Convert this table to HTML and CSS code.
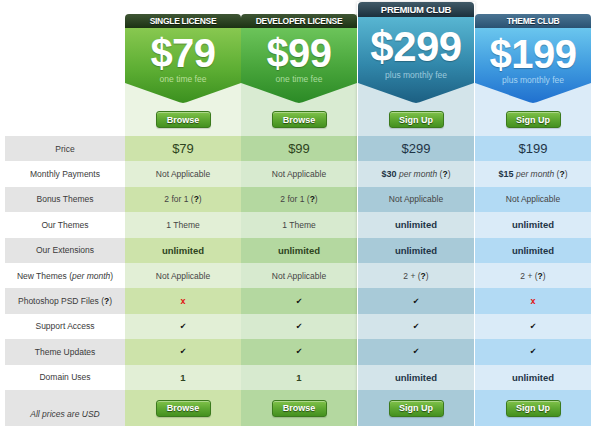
FILE: index.html
```html
<!DOCTYPE html>
<html>
<head>
<meta charset="utf-8">
<link rel="stylesheet" href="styles.css">
</head>
<body>
<div class="pricing">
  <div class="col labels">
    <div class="rows">
      <div class="cell">Price</div>
      <div class="cell">Monthly Payments</div>
      <div class="cell">Bonus Themes</div>
      <div class="cell">Our Themes</div>
      <div class="cell">Our Extensions</div>
      <div class="cell">New Themes (<i>per month</i>)</div>
      <div class="cell">Photoshop PSD Files (<b class="q">?</b>)</div>
      <div class="cell">Support Access</div>
      <div class="cell">Theme Updates</div>
      <div class="cell">Domain Uses</div>
      <div class="cell last note-cell"><i>All prices are USD</i></div>
    </div>
  </div>

  <div class="col plan single">
    <div class="tab">Single License</div>
    <div class="top">
      <div class="price"><div class="amount">$79</div><div class="fee">one time fee</div></div>
      <div class="btn-wrap"><span class="btn">Browse</span></div>
    </div>
    <div class="rows">
      <div class="cell big">$79</div>
      <div class="cell">Not Applicable</div>
      <div class="cell">2 for 1 (<b class="q">?</b>)</div>
      <div class="cell">1 Theme</div>
      <div class="cell strong">unlimited</div>
      <div class="cell">Not Applicable</div>
      <div class="cell"><span class="no">x</span></div>
      <div class="cell"><span class="yes">✔</span></div>
      <div class="cell"><span class="yes">✔</span></div>
      <div class="cell strong">1</div>
      <div class="cell last"><span class="btn">Browse</span></div>
    </div>
  </div>

  <div class="col plan developer">
    <div class="tab">Developer License</div>
    <div class="top">
      <div class="price"><div class="amount">$99</div><div class="fee">one time fee</div></div>
      <div class="btn-wrap"><span class="btn">Browse</span></div>
    </div>
    <div class="rows">
      <div class="cell big">$99</div>
      <div class="cell">Not Applicable</div>
      <div class="cell">2 for 1 (<b class="q">?</b>)</div>
      <div class="cell">1 Theme</div>
      <div class="cell strong">unlimited</div>
      <div class="cell">Not Applicable</div>
      <div class="cell"><span class="yes">✔</span></div>
      <div class="cell"><span class="yes">✔</span></div>
      <div class="cell"><span class="yes">✔</span></div>
      <div class="cell strong">1</div>
      <div class="cell last"><span class="btn">Browse</span></div>
    </div>
  </div>

  <div class="col plan premium">
    <div class="tab">Premium Club</div>
    <div class="top">
      <div class="price"><div class="amount">$299</div><div class="fee">plus monthly fee</div></div>
      <div class="btn-wrap"><span class="btn">Sign Up</span></div>
    </div>
    <div class="rows">
      <div class="cell big">$299</div>
      <div class="cell"><b class="dk">$30</b>&nbsp;<i>per month</i>&nbsp;(<b class="q">?</b>)</div>
      <div class="cell">Not Applicable</div>
      <div class="cell strong">unlimited</div>
      <div class="cell strong">unlimited</div>
      <div class="cell">2 + (<b class="q">?</b>)</div>
      <div class="cell"><span class="yes">✔</span></div>
      <div class="cell"><span class="yes">✔</span></div>
      <div class="cell"><span class="yes">✔</span></div>
      <div class="cell strong">unlimited</div>
      <div class="cell last"><span class="btn">Sign Up</span></div>
    </div>
  </div>

  <div class="col plan theme">
    <div class="tab">Theme Club</div>
    <div class="top">
      <div class="price"><div class="amount">$199</div><div class="fee">plus monthly fee</div></div>
      <div class="btn-wrap"><span class="btn">Sign Up</span></div>
    </div>
    <div class="rows">
      <div class="cell big">$199</div>
      <div class="cell"><b class="dk">$15</b>&nbsp;<i>per month</i>&nbsp;(<b class="q">?</b>)</div>
      <div class="cell">Not Applicable</div>
      <div class="cell strong">unlimited</div>
      <div class="cell strong">unlimited</div>
      <div class="cell">2 + (<b class="q">?</b>)</div>
      <div class="cell"><span class="no">x</span></div>
      <div class="cell"><span class="yes">✔</span></div>
      <div class="cell"><span class="yes">✔</span></div>
      <div class="cell strong">unlimited</div>
      <div class="cell last"><span class="btn">Sign Up</span></div>
    </div>
  </div>
</div>
</body>
</html>
```

FILE: styles.css
```css
html, body {
  margin: 0;
  padding: 0;
  background: #fff;
}

.pricing {
  display: flex;
  align-items: flex-start;
  padding-left: 5px;
  font-family: "Liberation Sans", Arial, sans-serif;
  color: #444;
}

.col {
  display: flex;
  flex-direction: column;
}

.labels {
  width: 120px;
  padding-top: 136px;
  --dark: #e4e4e4;
  --light: #ffffff;
}

.labels .cell {
  color: #3a3a3a;
}

.plan {
  width: 116px;
  margin-top: 14px;
}

.single {
  --dark: #cde3aa;
  --light: #e2efd6;
  --bg: #ebf4e3;
  --band-top: #3f5634;
  --band-bot: #1c3213;
  --p-top: #88c850;
  --p-mid: #5dae33;
  --p-bot: #3b901f;
  --ink: #2e4420;
  --fee: #b9df99;
}

.developer {
  --dark: #b4d8a0;
  --light: #d7eacf;
  --bg: #d9ebd2;
  --band-top: #3f5634;
  --band-bot: #1c3213;
  --p-top: #6cc45a;
  --p-mid: #47a43a;
  --p-bot: #2b8a26;
  --ink: #2e4420;
  --fee: #a9dc9e;
  box-shadow: inset -1px 0 0 rgba(60, 110, 40, 0.25);
}

.premium {
  --dark: #a8cad8;
  --light: #d3e4ea;
  --bg: #d3e4ea;
  --band-top: #415a68;
  --band-bot: #1b303c;
  --p-top: #58b6d2;
  --p-mid: #3288ab;
  --p-bot: #1c5f82;
  --ink: #1e3446;
  --fee: #9cc9dc;
  width: 116px;
  margin-top: 2px;
  border-left: 1px solid #fff;
  border-right: 1px solid #fff;
  box-shadow: 0 0 3px rgba(0, 0, 0, 0.18);
}

.theme {
  --dark: #b2daf4;
  --light: #daebf8;
  --bg: #dbebf8;
  --band-top: #4a7493;
  --band-bot: #2a5272;
  --p-top: #6ac6ee;
  --p-mid: #3d98de;
  --p-bot: #2070cf;
  --ink: #1e3446;
  --fee: #a6d3f2;
}

.tab {
  height: 14px;
  border-radius: 4px 4px 0 0;
  background: linear-gradient(var(--band-top), var(--band-bot));
  color: #fff;
  font-weight: bold;
  font-size: 8.5px;
  letter-spacing: -0.3px;
  text-transform: uppercase;
  display: flex;
  align-items: center;
  justify-content: center;
  text-shadow: 0 1px 0 rgba(0, 0, 0, 0.5);
}

.premium .tab {
  height: 15px;
  font-size: 9.5px;
}

.top {
  background: var(--bg);
  height: 108px;
  display: flex;
  flex-direction: column;
}

.premium .top {
  height: 119px;
}

.price {
  height: 75px;
  background: linear-gradient(var(--p-top), var(--p-mid) 55%, var(--p-bot));
  clip-path: polygon(0 0, 100% 0, 100% 55px, 53% 99%, 50% 100%, 47% 99%, 0 55px);
  text-align: center;
  color: #fff;
  padding-top: 5px;
  box-sizing: border-box;
}

.premium .price {
  height: 86px;
  padding-top: 9px;
  clip-path: polygon(0 0, 100% 0, 100% 66px, 53% 99%, 50% 100%, 47% 99%, 0 66px);
}

.amount {
  font-size: 40px;
  line-height: 40px;
  font-weight: bold;
  letter-spacing: -0.5px;
  text-shadow: 0 1px 1px rgba(0, 0, 0, 0.25);
}

.premium .amount {
  font-size: 42px;
  line-height: 42px;
}

.theme .amount {
  padding-top: 1px;
}

.fee {
  font-size: 8.5px;
  line-height: 10px;
  margin-top: 1px;
  color: var(--fee);
}

.premium .fee {
  margin-top: 2px;
}

.btn-wrap {
  display: flex;
  justify-content: center;
  padding-top: 8px;
}

.btn {
  display: inline-flex;
  align-items: center;
  justify-content: center;
  width: 55px;
  height: 17px;
  box-sizing: border-box;
  border: 1px solid #3b7a1d;
  border-radius: 3px;
  background: linear-gradient(#80c24a, #5ea832 50%, #44901f);
  box-shadow: inset 0 1px 0 rgba(255, 255, 255, 0.35), 0 1px 1px rgba(0, 0, 0, 0.15);
  color: #fff;
  font-weight: bold;
  font-size: 9px;
  text-shadow: 0 1px 1px rgba(0, 0, 0, 0.55);
}

.rows {
  display: flex;
  flex-direction: column;
}

.cell {
  height: 25.4px;
  display: flex;
  align-items: center;
  justify-content: center;
  font-size: 8.5px;
  background: var(--light);
  white-space: nowrap;
}

.cell:nth-child(odd) {
  background: var(--dark);
}

.cell.last {
  height: 36px;
  padding-top: 1px;
  box-sizing: border-box;
}

.labels .note-cell {
  align-items: flex-end;
  padding-bottom: 7px;
  font-size: 8.5px;
}

.big {
  font-size: 13px;
  color: var(--ink);
}

.strong {
  font-size: 9.5px;
  font-weight: bold;
  color: var(--ink);
}

.dk {
  color: var(--ink);
  font-size: 9px;
}

.q {
  color: #111;
}

.yes {
  font-family: "DejaVu Sans", sans-serif;
  font-size: 8px;
  color: #111;
}

.no {
  font-weight: bold;
  font-size: 9px;
  color: #e01010;
}
```
